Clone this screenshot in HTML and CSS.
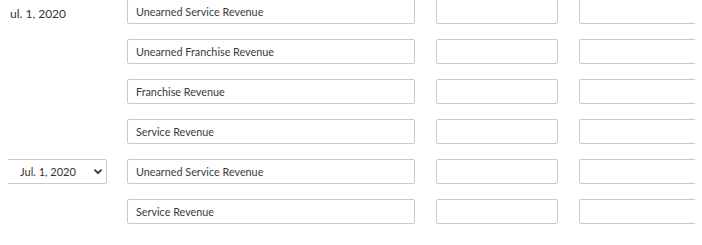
FILE: index.html
```html
<!DOCTYPE html>
<html>
<head>
<meta charset="utf-8">
<link rel="stylesheet" href="styles.css">
</head>
<body>
<div class="sheet">
  <div class="date"><span class="date-text">ul. 1, 2020</span></div>
  <div class="box">Unearned Service Revenue</div>
  <div class="box"></div>
  <div class="box"></div>

  <div class="date"></div>
  <div class="box">Unearned Franchise Revenue</div>
  <div class="box"></div>
  <div class="box"></div>

  <div class="date"></div>
  <div class="box">Franchise Revenue</div>
  <div class="box"></div>
  <div class="box"></div>

  <div class="date"></div>
  <div class="box">Service Revenue</div>
  <div class="box"></div>
  <div class="box"></div>

  <div class="date">
    <div class="select">
      <span>Jul. 1, 2020</span>
      <svg class="chev" width="8" height="6" viewBox="0 0 8 6"><path d="M1 1.2 L4 4.2 L7 1.2" fill="none" stroke="#333" stroke-width="1.8" stroke-linecap="round" stroke-linejoin="round"/></svg>
    </div>
  </div>
  <div class="box">Unearned Service Revenue</div>
  <div class="box"></div>
  <div class="box"></div>

  <div class="date"></div>
  <div class="box">Service Revenue</div>
  <div class="box"></div>
  <div class="box"></div>
</div>
</body>
</html>
```

FILE: styles.css
```css
html, body {
  margin: 0;
  padding: 0;
  background: #ffffff;
}
body {
  font-family: Lato, "Noto Sans", sans-serif;
  color: #333333;
}
.sheet {
  margin-top: -1px;
  margin-left: 8px;
  width: 687px;
  overflow: hidden;
  display: grid;
  grid-template-columns: 98px 288px 122px 122px;
  grid-auto-rows: 25px;
  column-gap: 21px;
  row-gap: 15px;
}
.date {
  display: flex;
  align-items: center;
}
.date-text {
  font-size: 12px;
  padding-left: 2px;
  padding-top: 3px;
  color: #333333;
}
.box {
  box-sizing: border-box;
  height: 25px;
  border: 1px solid #c9c9c9;
  border-radius: 2px;
  padding-left: 8px;
  font-size: 10.8px;
  line-height: 23px;
  color: #3a3a3a;
  white-space: nowrap;
  overflow: hidden;
}
.select {
  box-sizing: border-box;
  flex: none;
  margin-left: -4px;
  width: 103px;
  height: 25px;
  border: 1px solid #c9c9c9;
  border-radius: 2px;
  padding-left: 15px;
  padding-right: 4px;
  display: flex;
  align-items: center;
  justify-content: space-between;
  font-size: 11px;
  color: #333333;
}
.chev {
  display: block;
}
```
